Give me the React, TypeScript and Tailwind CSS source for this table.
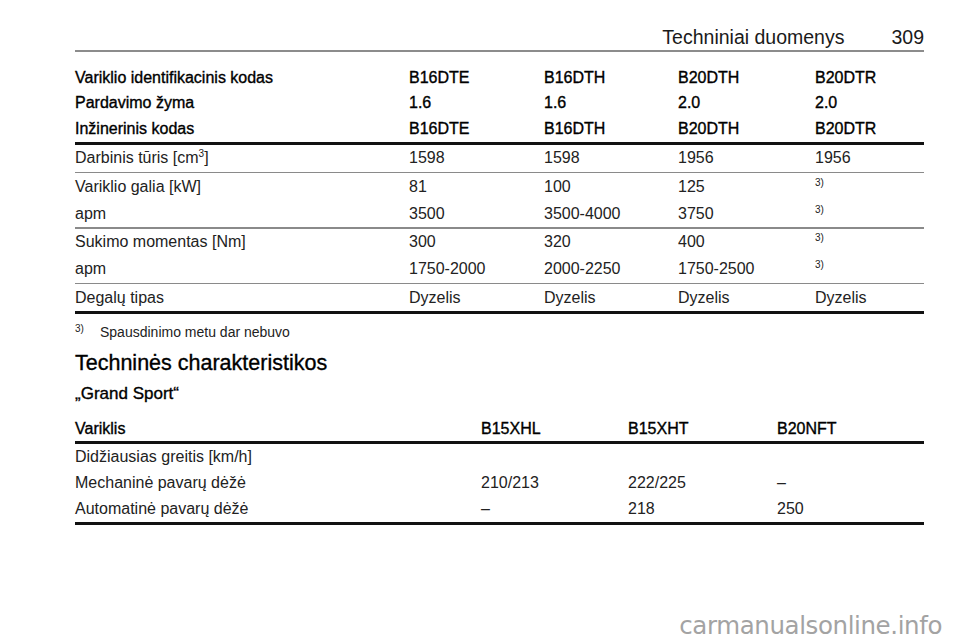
import React from "react";

const Sup = ({ children }: { children: React.ReactNode }) => (
  <span className="text-[10px] relative -top-[6px]">{children}</span>
);

const t1Cols = "grid grid-cols-[334px_135px_134px_137px_1fr] items-center";
const t2Cols = "grid grid-cols-[406px_147px_149px_1fr] items-center";
const strong = "text-[#000] [-webkit-text-stroke:0.35px_#000]";

function HeadRow({ cells, cols = t1Cols, h = "h-[25.5px]" }: { cells: string[]; cols?: string; h?: string }) {
  return (
    <div className={`${cols} ${h} text-[16px] ${strong}`}>
      {cells.map((c, i) => (
        <div key={i}>{c}</div>
      ))}
    </div>
  );
}

function BodyRow({ cells, cols = t1Cols, h = "h-[27px]" }: { cells: React.ReactNode[]; cols?: string; h?: string }) {
  return (
    <div className={`${cols} ${h} text-[16px]`}>
      {cells.map((c, i) => (
        <div key={i}>{c}</div>
      ))}
    </div>
  );
}

const Thin = () => <div className="h-[1.5px] bg-[#8a8a8a]" />;
const Thick = () => <div className="h-[3px] bg-[#111]" />;

export default function App() {
  const s3 = <Sup>3)</Sup>;
  return (
    <div className="relative w-[960px] h-[642px] bg-white overflow-hidden pl-[75px] pr-[36px] text-[#222] font-['Liberation_Sans',Arial,sans-serif]">
      <div className="flex justify-end items-end h-[52px] border-b-2 border-[#8c8c8c] pb-[3px] text-[19.5px] leading-none gap-[47px] text-[#1a1a1a]">
        <span>Techniniai duomenys</span>
        <span>309</span>
      </div>

      <div className="mt-[13px]">
        <HeadRow cells={["Variklio identifikacinis kodas", "B16DTE", "B16DTH", "B20DTH", "B20DTR"]} />
        <HeadRow cells={["Pardavimo žyma", "1.6", "1.6", "2.0", "2.0"]} />
        <HeadRow cells={["Inžinerinis kodas", "B16DTE", "B16DTH", "B20DTH", "B20DTR"]} />
        <Thick />
        <BodyRow
          cells={[
            <span>
              Darbinis tūris [cm<Sup>3</Sup>]
            </span>,
            "1598",
            "1598",
            "1956",
            "1956",
          ]}
        />
        <Thin />
        <BodyRow cells={["Variklio galia [kW]", "81", "100", "125", s3]} />
        <BodyRow cells={["apm", "3500", "3500-4000", "3750", s3]} />
        <Thin />
        <BodyRow cells={["Sukimo momentas [Nm]", "300", "320", "400", s3]} />
        <BodyRow cells={["apm", "1750-2000", "2000-2250", "1750-2500", s3]} />
        <Thin />
        <BodyRow cells={["Degalų tipas", "Dyzelis", "Dyzelis", "Dyzelis", "Dyzelis"]} />
        <Thick />
      </div>

      <div className="mt-[8px] h-[20px] flex items-center text-[14px]">
        <span className="w-[25px] text-[10px] relative -top-[4px]">3)</span>
        <span>Spausdinimo metu dar nebuvo</span>
      </div>

      <h1 className={`mt-[7px] h-[28px] flex items-center text-[21.5px] ${strong}`}>
        Techninės charakteristikos
      </h1>
      <h2 className={`mt-[5px] h-[24px] flex items-center text-[17px] ${strong}`}>„Grand Sport“</h2>

      <div className="mt-[10px]">
        <HeadRow cols={t2Cols} h="h-[25px]" cells={["Variklis", "B15XHL", "B15XHT", "B20NFT"]} />
        <Thick />
        <BodyRow cols={t2Cols} h="h-[26px]" cells={["Didžiausias greitis [km/h]", "", "", ""]} />
        <BodyRow cols={t2Cols} h="h-[26px]" cells={["Mechaninė pavarų dėžė", "210/213", "222/225", "–"]} />
        <BodyRow cols={t2Cols} h="h-[26px]" cells={["Automatinė pavarų dėžė", "–", "218", "250"]} />
        <Thick />
      </div>

      <div className="absolute right-[18px] bottom-[4px] text-[24.5px] text-[#a3a3a3] leading-none font-['DejaVu_Sans',sans-serif] tracking-[-0.4px]">
        carmanualsonline.info
      </div>
    </div>
  );
}
